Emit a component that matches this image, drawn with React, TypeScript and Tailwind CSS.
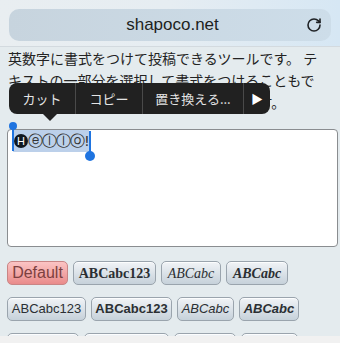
import { RotateCw } from "lucide-react";

const jp = { fontFamily: '"Noto Sans CJK JP", "Noto Sans", sans-serif' };

interface StyleButton {
  label: string;
  className: string;
}

const rowOne: StyleButton[] = [
  { label: "ABCabc123", className: "font-['Liberation_Serif'] font-bold text-[14px] w-[83px]" },
  { label: "ABCabc", className: "font-['Liberation_Serif'] italic text-[14px] w-[60px]" },
  { label: "ABCabc", className: "font-['Liberation_Serif'] italic font-bold text-[14px] w-[62px]" }
];

const rowTwo: StyleButton[] = [
  { label: "ABCabc123", className: "font-['Liberation_Sans'] text-[13px] w-[79px]" },
  { label: "ABCabc123", className: "font-['Liberation_Sans'] font-bold text-[13px] w-[81px]" },
  { label: "ABCabc", className: "font-['Liberation_Sans'] italic text-[13px] w-[57px]" },
  { label: "ABCabc", className: "font-['Liberation_Sans'] italic font-bold text-[13px] w-[60px]" }
];

// only the top edge of the third row is on screen
const rowThree: StyleButton[] = [
  { label: "", className: "w-[72px]" },
  { label: "", className: "w-[85px]" },
  { label: "", className: "w-[62px]" },
  { label: "", className: "w-[57px]" }
];

const btnBase =
  "flex h-[24px] shrink-0 items-center justify-center rounded-[5px] border border-[#9aa4ad] bg-gradient-to-b from-[#f1f4f7] to-[#c6d1da] text-[#2b2f33] shadow-[inset_0_1px_0_rgba(255,255,255,0.8)]";

function ButtonRow({ items, lead }: { items: StyleButton[]; lead?: boolean }) {
  return (
    <div className="flex gap-[5px]">
      {lead ? (
        <button
          type="button"
          className="flex h-[24px] w-[61px] shrink-0 items-center justify-center rounded-[5px] border border-[#c98585] bg-gradient-to-b from-[#fbc4c4] to-[#e98b8b] font-['Liberation_Sans'] text-[16px] text-[#7c4040]"
        >
          Default
        </button>
      ) : null}
      {items.map((item, i) => (
        <button key={i} type="button" className={`${btnBase} ${item.className}`}>
          {item.label}
        </button>
      ))}
    </div>
  );
}

export default function App() {
  return (
    <div className="flex h-[343px] w-[340px] flex-col overflow-hidden bg-[#e4ebee]">
      {/* browser address bar */}
      <div className="h-[47px] shrink-0 border-b border-[#d3dadf] bg-gradient-to-r from-[#e9eef1] via-[#e6edf2] to-[#d6e7f4] px-[9px] pt-[9px]">
        <div className="flex h-[32px] items-center rounded-[10px] bg-gradient-to-r from-[#c7d4de] to-[#cddde9] pl-[30px] pr-[9px]">
          <span className="flex-1 text-center font-['Liberation_Sans'] text-[17px] text-[#1d1f21]">
            shapoco.net
          </span>
          <RotateCw className="size-[16px] text-[#1f2225]" strokeWidth={2.4} />
        </div>
      </div>

      <div className="relative flex-1 overflow-hidden">
        <p className="w-[324px] pl-[8px] text-[14px] leading-[22px] text-[#232323]" style={jp}>
          英数字に書式をつけて投稿できるツールです。 テキストの一部分を選択して書式をつけることもできます。ボタンで書式を切り替えられます。
        </p>

        {/* iOS edit menu */}
        <div className="absolute left-[9px] top-[36px]" style={jp}>
          <div className="flex h-[31px] w-[261px] items-center rounded-[8px] bg-[#212121] text-[13px] text-[#e4e4e4]">
            <span className="flex h-full w-[67px] items-center justify-center border-r border-[#4a4a4a]">カット</span>
            <span className="flex h-full w-[67px] items-center justify-center border-r border-[#4a4a4a]">コピー</span>
            <span className="flex h-full w-[101px] items-center justify-center border-r border-[#4a4a4a]">置き換える...</span>
            <span className="flex h-full flex-1 items-center justify-center text-[12px] text-white">▶</span>
          </div>
          <div className="ml-[34px] h-0 w-0 border-x-[7px] border-t-[7px] border-x-transparent border-t-[#212121]" />
        </div>

        {/* text area */}
        <div className="relative mt-[16px] ml-[7px] h-[118px] w-[331px] rounded-[4px] border border-[#8a8d90] bg-white">
          <div className="relative ml-[5px] flex h-[22px] w-fit items-center bg-[#bcd0ea] text-[#333]">
            <span className="ml-[1px] flex size-[14px] shrink-0 items-center justify-center rounded-full bg-[#101820] font-['Liberation_Sans'] text-[11px] leading-none text-white">
              H
            </span>
            <span className="whitespace-nowrap font-['DejaVu_Sans'] text-[14.5px] leading-none tracking-[-1px]">ⓔⓛⓛⓞ!</span>
            {/* selection handles */}
            <div className="absolute left-[-1px] top-[-5px] h-[26px] w-[2px] bg-[#1f74e0]" />
            <div className="absolute left-[-4px] top-[-8px] size-[8px] rounded-full bg-[#1f74e0]" />
            <div className="absolute right-[-2px] top-[1px] h-[22px] w-[2px] bg-[#1f74e0]" />
            <div className="absolute right-[-6px] top-[21px] size-[10px] rounded-full bg-[#1f74e0]" />
          </div>
        </div>

        <div className="mt-[14px] flex flex-col gap-[12px] pl-[7px]">
          <ButtonRow items={rowOne} lead />
          <ButtonRow items={rowTwo} />
          <ButtonRow items={rowThree} />
        </div>
      </div>

      {/* bottom toolbar edge */}
      <div className="h-[7px] shrink-0 bg-[#f1f1f1]" />
    </div>
  );
}
